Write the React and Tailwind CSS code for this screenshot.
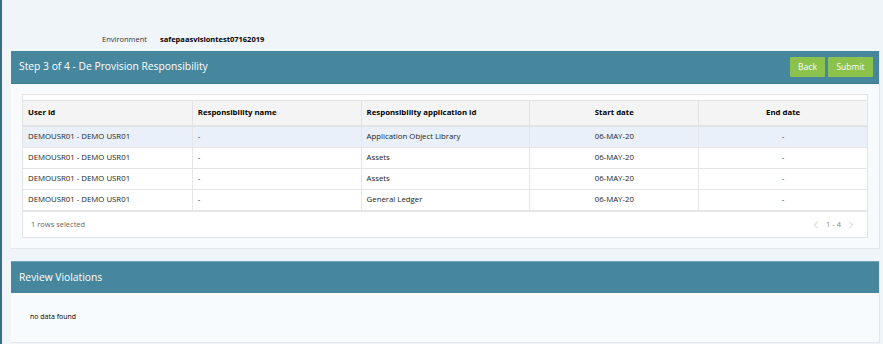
import React from 'react';
import { ChevronLeft, ChevronRight } from 'lucide-react';

const rows = [
  { user: 'DEMOUSR01 - DEMO USR01', resp: '-', app: 'Application Object Library', start: '06-MAY-20', end: '-' },
  { user: 'DEMOUSR01 - DEMO USR01', resp: '-', app: 'Assets', start: '06-MAY-20', end: '-' },
  { user: 'DEMOUSR01 - DEMO USR01', resp: '-', app: 'Assets', start: '06-MAY-20', end: '-' },
  { user: 'DEMOUSR01 - DEMO USR01', resp: '-', app: 'General Ledger', start: '06-MAY-20', end: '-' },
];

export default function App() {
  return (
    <div
      className="w-[883px] h-[344px] overflow-hidden bg-[#f0f5f9] border-l-2 border-[#3d6f82] text-[#222]"
      style={{ fontFamily: '"Open Sans", "Noto Sans", sans-serif' }}
    >
      {/* Environment */}
      <div className="h-[51px] flex items-end pb-[6px] pl-[100px] text-[7.5px]">
        <span className="text-[#333]">Environment</span>
        <span className="ml-[13px] font-bold text-black">safepaasvisiontest07162019</span>
      </div>

      {/* Step panel */}
      <div className="ml-[9px] w-[869px] bg-[#f8fbfd] border-r border-b border-[#e1e7ec]">
        <div className="h-[33px] bg-[#46879e] flex items-center justify-between pl-[8px] pr-[6px] border-b border-[#3f7a8f]">
          <span className="text-white text-[10.3px]">Step 3 of 4 - De Provision Responsibility</span>
          <div className="flex gap-[3px]">
            <button className="h-[20px] w-[35px] bg-[#8bc24c] text-white text-[8.5px] rounded-[1px]">Back</button>
            <button className="h-[20px] w-[45px] bg-[#8bc24c] text-white text-[8.5px] rounded-[1px]">Submit</button>
          </div>
        </div>
        <div className="px-[11px] pt-[10px] pb-[10px]">
          <div className="bg-white border border-[#e3e3e3]">
            <div className="h-[5px]" />
            <div className="grid grid-cols-5 bg-[#f4f4f4] border-t border-b-2 border-[#e2e2e2] h-[27px] text-[7.8px] font-bold text-black">
              <div className="flex items-center pl-[5px]">User id</div>
              <div className="flex items-center pl-[5px] border-l border-[#e2e2e2]">Responsibility name</div>
              <div className="flex items-center pl-[5px] border-l border-[#e2e2e2]">Responsibility application id</div>
              <div className="flex items-center justify-center border-l border-[#e2e2e2]">Start date</div>
              <div className="flex items-center justify-center border-l border-[#e2e2e2]">End date</div>
            </div>
            {rows.map((r, i) => (
              <div
                key={i}
                className={`grid grid-cols-5 h-[21px] text-[7.8px] text-[#222] border-b border-[#e6e6e6] ${i === 0 ? 'bg-[#e9f0fa]' : 'bg-white'}`}
              >
                <div className="flex items-center pl-[5px]">{r.user}</div>
                <div className="flex items-center pl-[5px] border-l border-[#e6e6e6]">{r.resp}</div>
                <div className="flex items-center pl-[5px] border-l border-[#e6e6e6]">{r.app}</div>
                <div className="flex items-center justify-center border-l border-[#e6e6e6]">{r.start}</div>
                <div className="flex items-center justify-center border-l border-[#e6e6e6]">{r.end}</div>
              </div>
            ))}
            <div className="h-[26px] flex items-center justify-between pl-[8px] pr-[10px] border-t border-[#e6e6e6] text-[7.5px] text-[#666]">
              <span>1 rows selected</span>
              <div className="flex items-center gap-[4px] text-[#888]">
                <ChevronLeft size={12} strokeWidth={1.3} className="text-[#aaa]" />
                <span>1 - 4</span>
                <ChevronRight size={12} strokeWidth={1.3} className="text-[#aaa]" />
              </div>
            </div>
          </div>
        </div>
      </div>

      {/* Review Violations panel */}
      <div className="mt-[12px] ml-[9px] w-[869px] bg-[#f8fbfd] border-r border-b border-[#e1e7ec]">
        <div className="h-[32px] bg-[#46879e] flex items-center pl-[8px] border-t border-[#6fa6bb]">
          <span className="text-white text-[10.3px]">Review Violations</span>
        </div>
        <div className="h-[49px] flex items-center pl-[19px] text-[7px] text-black">no data found</div>
      </div>
    </div>
  );
}
